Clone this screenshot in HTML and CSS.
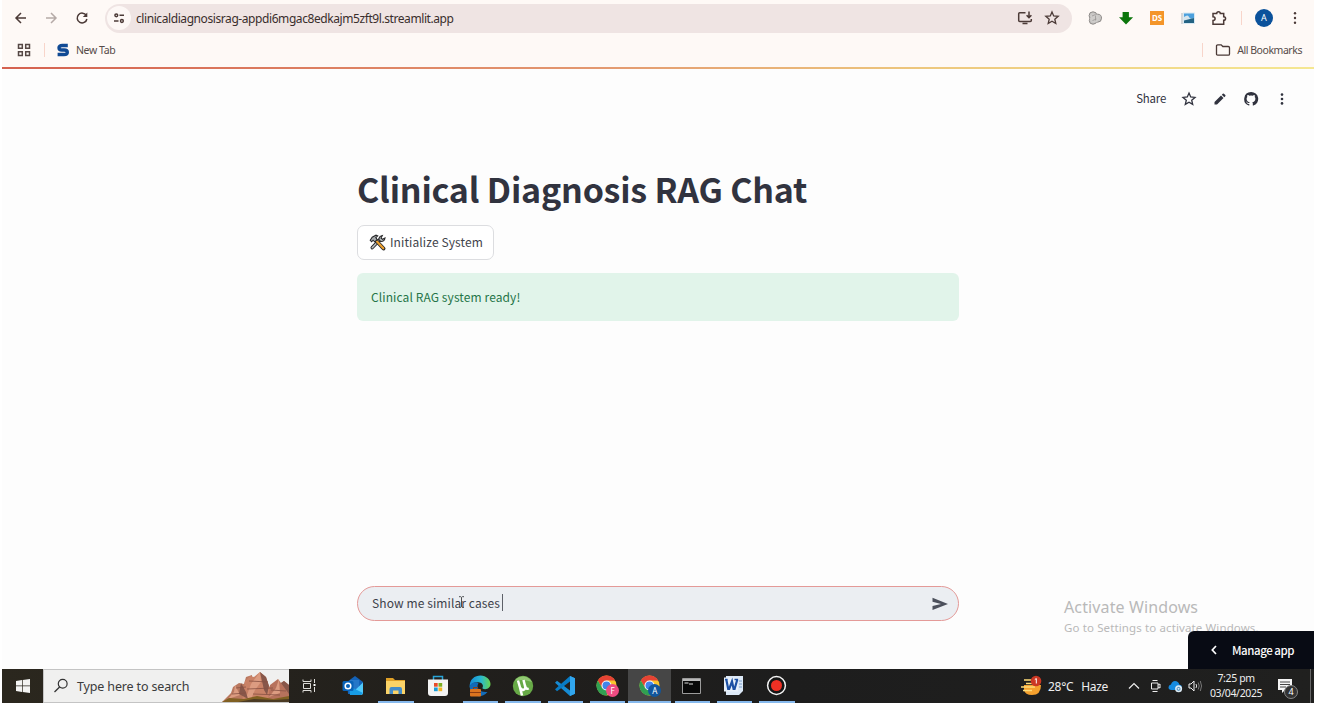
FILE: index.html
```
<!DOCTYPE html>
<html lang="en">
<head>
<meta charset="utf-8">
<title>Clinical Diagnosis RAG Chat</title>
<link rel="stylesheet" href="styles.css">
</head>
<body>
<div class="screen">
  <header class="browser">
    <div class="toolbar">
      <svg class="ico back" viewBox="0 0 16 16"><path d="M13 8H3.500M8 3L3 8l5 5" class="ln"/></svg>
      <svg class="ico fwd" viewBox="0 0 16 16"><path d="M3 8h9.500M8 3l5 5-5 5" class="ln faded"/></svg>
      <svg class="ico reload" viewBox="0 0 16 16"><path d="M12.300 5.500A4.900 4.900 0 1 0 12.900 9" class="ln"/><path d="M13.300 2.500v4.500H8.800z" fill="#4b3a37"/></svg>
      <div class="omnibox">
        <span class="site"><svg viewBox="0 0 14 14" width="14" height="14"><g fill="none" stroke="#4b3a37" stroke-width="1.500"><circle cx="4.300" cy="4.300" r="1.400"/><path d="M7.500 4.300h4.500M2 10h4.500"/><circle cx="9.900" cy="10" r="1.400"/></g></svg></span>
        <span class="url">clinicaldiagnosisrag-appdi6mgac8edkajm5zft9l.streamlit.app</span>
        <svg class="ico install" viewBox="0 0 16 16"><path d="M8.500 2.800H2.700q-1 0-1 1v6.700q0 1 1 1h10.600q1 0 1-1V9M5.500 13.400h5M12 1.500v5.800M9.600 5.200L12 7.600l2.400-2.400" class="ln"/></svg>
        <svg class="ico" viewBox="0 0 16 16"><path d="M8 1.900l1.700 4 4.500.4-3.400 2.900 1 4.300L8 11.300l-3.800 2.200 1-4.300-3.400-2.900 4.500-.4z" class="ln thin"/></svg>
      </div>
      <div class="extensions">
        <svg class="ico" viewBox="0 0 16 16"><g fill="#c9c7c5" stroke="#8d8a88" stroke-width="1"><circle cx="6" cy="5.700" r="3.900"/><circle cx="10.500" cy="8.200" r="4"/><circle cx="6" cy="10.500" r="3.700"/></g><circle cx="7.500" cy="8.200" r="4.300" fill="#cfcdcb"/><path d="M5 6l3.500-1.500M5.500 10.500l4-1.500M8.500 5.500v5" stroke="#9a9795" stroke-width=".8" fill="none"/></svg>
        <svg class="ico" viewBox="0 0 16 16"><path d="M4.600 2h6.300v5.200h4.200L8 14.600 1 7.200h3.600z" fill="#0b760b"/></svg>
        <span class="ds">DS</span>
        <svg class="ico" viewBox="0 0 16 16"><path d="M1 3h3v11H1z" fill="#d5d7d9"/><path d="M3 2.500h12v11.500H3z" fill="#d9e9f3"/><path d="M4 3.500h10v6.500H4z" fill="#4ca0dd"/><path d="M4 7q4-3 5 0t5 1v5H4z" fill="#d6e5ed"/><path d="M4 10.500l10-2.500v5H4z" fill="#246383"/></svg>
        <svg class="ico" viewBox="0 0 16 16"><path d="M2 3.500h3.700c0-2.500 3.600-2.500 3.600 0h3.400v3.200c2.500 0 2.500 3.600 0 3.600v3.900H2v-3.700c2.800-.2 2.800-3.500 0-3.700z" class="ln"/></svg>
        <i class="sep"></i>
        <span class="avatar">A</span>
        <svg class="ico" viewBox="0 0 16 16" fill="#4b3a37"><circle cx="8" cy="3.300" r="1.200"/><circle cx="8" cy="8" r="1.200"/><circle cx="8" cy="12.700" r="1.200"/></svg>
      </div>
    </div>
    <div class="bookmarks">
      <svg width="14" height="14" viewBox="0 0 14 14"><g fill="none" stroke="#554744" stroke-width="1.500"><path d="M1.500 1.500h3.800v3.800H1.500zM8.700 1.500h3.800v3.800H8.700zM1.500 8.700h3.800v3.800H1.500zM8.700 8.700h3.800v3.800H8.700z"/></g></svg>
      <i class="sep"></i>
      <svg class="slogo" width="14" height="14" viewBox="0 0 14 14"><path d="M11.800 2.500H6.200Q3 2.500 3 4.700t3 2.300h2.200Q11.300 7 11.300 9.200t-3.300 2.300H1.600" fill="none" stroke="#104a94" stroke-width="3.400"/></svg>
      <span class="newtab">New Tab</span>
      <i class="sep right"></i>
      <svg class="folder" width="16" height="14" viewBox="0 0 16 14"><path d="M1.500 3q0-1.200 1.200-1.200h3.500l1.600 1.700h5.500q1.200 0 1.200 1.200v6.300q0 1.200-1.200 1.200H2.700q-1.200 0-1.200-1.200z" class="ln thin"/></svg>
      <span class="allbm">All Bookmarks</span>
    </div>
    <div class="rainbow"></div>
  </header>

  <main class="app">
    <nav class="appbar">
      <span class="share">Share</span>
      <svg class="ico" viewBox="0 0 16 16"><path d="M8 2.100l1.700 3.900 4.300.4-3.300 2.800 1 4.200L8 11.200l-3.700 2.200 1-4.200L2 6.400l4.300-.4z" fill="none" stroke="#31333f" stroke-width="1.300"/></svg>
      <svg class="ico" viewBox="0 0 16 16"><path d="M2.500 11V13.500h2.500l6.500-6.500-2.500-2.500zM9.800 3.700l2.500 2.500 1-1q.5-.5 0-1.100l-1.400-1.400q-.6-.5-1.100 0z" fill="#31333f"/></svg>
      <svg class="ico" viewBox="0 0 16 16"><path d="M8 1.100a6.900 6.900 0 0 0-2.200 13.400c.35.100.5-.1.500-.3v-1.300c-1.900.4-2.300-.8-2.300-.8-.3-.8-.8-1-.8-1-.6-.4.100-.4.100-.4.700 0 1 .7 1 .7.600 1 1.600.7 2 .6.100-.5.200-.8.400-.9-1.500-.2-3.100-.8-3.100-3.400 0-.8.300-1.400.7-1.800-.1-.2-.3-.9.100-1.900 0 0 .6-.2 1.900.7a6.500 6.500 0 0 1 3.400 0c1.300-.9 1.900-.7 1.900-.7.400 1 .2 1.700.1 1.900.5.400.7 1 .7 1.800 0 2.600-1.600 3.200-3.100 3.400.2.200.5.600.5 1.300v1.900c0 .2.100.4.500.3A6.900 6.900 0 0 0 8 1.100z" fill="#31333f"/></svg>
      <svg class="ico" viewBox="0 0 16 16" fill="#31333f"><circle cx="8" cy="3.600" r="1.300"/><circle cx="8" cy="8" r="1.300"/><circle cx="8" cy="12.400" r="1.300"/></svg>
    </nav>
    <section class="column">
      <h1>Clinical Diagnosis RAG Chat</h1>
      <button class="init">
        <svg width="17" height="17" viewBox="0 0 17 17"><path d="M3.200 13.700L11 5.500" stroke="#29292b" stroke-width="3.400" stroke-linecap="round"/><path d="M3.200 13.700L11 5.500" stroke="#bcc0c2" stroke-width="1.500" stroke-linecap="round"/><path d="M10 5.800Q9.600 2.500 13.300 1.500L12 4l1.500 1.300 2.500-1.300Q15.500 7.700 11.700 7.500z" fill="#bcc0c2" stroke="#29292b" stroke-width="1.100"/><path d="M7 6.500l7.500 8" stroke="#29292b" stroke-width="3.800" stroke-linecap="round"/><path d="M8 7.500l6.300 6.800" stroke="#eda02e" stroke-width="2.100" stroke-linecap="round"/><path d="M1.200 6.200l2-3L7 1.200l1.700.7L6.800 3.600l1.400 2-2.500 2.200-1.600-1.600-1.500 1.600z" fill="#a9adaf" stroke="#29292b" stroke-width="1.100"/></svg>
        <span>Initialize System</span>
      </button>
      <div class="success">Clinical RAG system ready!</div>
      <div class="chat">
        <span class="typed">Show me similar cases</span><i class="caret"></i>
        <svg class="send" width="18" height="16" viewBox="0 0 18 16"><path d="M1.500 1.800L17 7.900 1.500 14v-4L10 7.900 1.500 5.800z" fill="#4c505c"/></svg>
        <svg class="ibeam" width="7" height="12" viewBox="0 0 7 12"><path d="M1 .7h1.700l.8.700.8-.7H6M3.500 1.400v9.300M1 11.300h1.700l.8-.7.8.700H6" fill="none" stroke="#4b4d50"/></svg>
      </div>
    </section>
    <div class="activate"><div class="act1">Activate Windows</div><div class="act2">Go to Settings to activate Windows.</div></div>
    <div class="manage">
      <svg width="8" height="12" viewBox="0 0 8 12"><path d="M6 2L2.300 6 6 10" fill="none" stroke="#fff" stroke-width="1.700"/></svg>
      <span>Manage app</span>
    </div>
  </main>

  <footer class="taskbar">
    <div class="start"><svg width="16" height="16" viewBox="0 0 16 16" fill="#f4f4f3"><path d="M1 3l6-.9v5.500H1zM7.700 2L15 1v6.600H7.700zM1 8.300h6v5.600L1 13zM7.700 8.300H15V15l-7.300-1z"/></svg></div>
    <div class="search">
      <svg class="mag" width="16" height="16" viewBox="0 0 16 16"><circle cx="9.700" cy="5.800" r="4.400" fill="none" stroke="#333" stroke-width="1.200"/><path d="M6.600 9L1.500 14" stroke="#333" stroke-width="1.300"/></svg>
      <span class="type">Type here to search</span>
      <svg class="mount" width="67" height="31" viewBox="0 0 67 31"><path d="M0 31l9-9 2-6 6-4 5 1 2-7 6-2 1 27z" fill="#b9785f"/><path d="M20 31l3-21 5-5 4 1 6-5 6 5 3 9 6 6 3 10z" fill="#c98267"/><path d="M46 31l2-17 8-6 3 4 3-2 5 4v17z" fill="#b7725c"/><path d="M38 1l1 10-6 8-4 9-5-1 5-14zM13 14l-1 7-6 7 12-4zM57 8l-3 9-7 9 11-4z" fill="#dc9c81"/><path d="M38 1l6 5 3 9-2 9-3-5zM19 12l5 9 2 7-9-5zM59 12l8 11v-9l-5-4z" fill="#87574a"/><path d="M14 17l10-1M27 10l19 1M25 18l26-1M49 19l15 1M10 23l14-1M31 23l27 1" stroke="#865143" stroke-width=".8" fill="none"/><path d="M0 31l7-4 15 1 13-3 16 3 16-3v6z" fill="#806022"/><path d="M16 31l16-3 20 1 15-1v3z" fill="#4b3a23"/></svg>
    </div>
    <div class="task view"><svg width="16" height="16" viewBox="0 0 16 16"><g fill="none" stroke="#dddcd8"><path d="M2 1.500v2h8v-2M2 14.500v-2h8v2M2.500 5.500h7v5h-7zM13.500 1v4M13.500 9v5"/></g><path d="M12.500 6h2v2h-2z" fill="#fff"/></svg></div>
    <div class="task"><svg width="22" height="22" viewBox="0 0 22 22"><path d="M5 7l8-6 8 6v12H6z" fill="#1462b7"/><path d="M8 5h9v9H8z" fill="#2577c8"/><path d="M9 19L21 7.500V18q0 2-2 2H9z" fill="#51cafb"/><path d="M7 11l14 7-2 2H8z" fill="#179ce5"/><rect x="0.500" y="6" width="11" height="10" rx="1.500" fill="#0862b7"/><circle cx="6" cy="11" r="2.800" fill="none" stroke="#fff" stroke-width="1.500"/></svg></div>
    <div class="task open"><svg width="22" height="22" viewBox="0 0 22 22"><path d="M1 3h7l2 2h10v5H1z" fill="#dfa027"/><path d="M1 6h19v13H1z" fill="#fbd367"/><path d="M4.500 19v-5q0-2 2-2h8.500q2 0 2 2v5h-3.500v-3.500h-5.500V19z" fill="#438cc9"/></svg></div>
    <div class="task"><svg width="22" height="22" viewBox="0 0 22 22"><path d="M6.500 5V1.500h9V5" fill="none" stroke="#2aa5d8" stroke-width="1.500"/><path d="M1 4.500h20V18q0 3-3 3H4q-3 0-3-3z" fill="#f3f3f3"/><path d="M7 8h3.700v3.700H7z" fill="#e84b28"/><path d="M11.500 8h3.700v3.700h-3.700z" fill="#7cae20"/><path d="M7 12.500h3.700v3.700H7z" fill="#189bd7"/><path d="M11.500 12.500h3.700v3.700h-3.700z" fill="#f3b423"/></svg></div>
    <div class="task open"><svg width="22" height="22" viewBox="0 0 22 22"><defs><linearGradient id="eg" x1="0" x2="1"><stop stop-color="#158bd8"/><stop offset=".55" stop-color="#29b8cf"/><stop offset="1" stop-color="#67d64c"/></linearGradient></defs><path d="M.7 13C0 4 6 .5 11.500.5c6 0 10 4.500 10 8.600 0 4.900-5.800 6.400-8.200 4.100 2-3-.8-6.200-4.500-5.900C4.500 7.300 1.500 9 .7 13z" fill="url(#eg)"/><path d="M.8 12c.3-5 7-6 8.700-3.500C7 11 9 18 18.500 17 14 22.500 7 22 4 19q-3-2.500-3.200-7z" fill="#126bb8"/><rect x="1" y="14" width="11" height="7.500" rx="1" fill="#db741f"/><path d="M1 17.500h11M4.500 14v-1.500h4V14" stroke="#8d3c12" fill="none"/></svg></div>
    <div class="task open"><svg width="22" height="22" viewBox="0 0 22 22"><circle cx="11" cy="11" r="10.200" fill="#67a947"/><path d="M3 5.500A10 10 0 0 1 20 7q-8-3-17-1.500z" fill="#91c873"/><path d="M6 5.500l2 7q1 3 3.700 2.200Q14 14 13 11l-1.500-6M13 11q1.200 3.800 3.800 2.500M8 12.500l2 8" fill="none" stroke="#fff" stroke-width="2.500"/></svg></div>
    <div class="task open"><svg width="22" height="22" viewBox="0 0 22 22"><path d="M16 1l5 2.200v15.600L16 21 1 7.700l2-2L16 15.500z" fill="#168bd3"/><path d="M16 1v5.500L3 16.300l-2-2z" fill="#087bc4"/><path d="M16 1l5 2.200v15.600L16 21z" fill="#31a6ee"/></svg></div>
    <div class="task open"><svg width="22" height="22" viewBox="0 0 22 22"><circle cx="10.500" cy="10.500" r="10" fill="#f8c42d"/><path d="M1.800 5.500A10 10 0 0 1 19.200 5.500H10.500L6.200 13z" fill="#e64334"/><path d="M1.800 5.500A10 10 0 0 0 10.500 20.500L14.800 13H6.200z" fill="#30a052"/><circle cx="10.500" cy="10.500" r="5" fill="#fff"/><circle cx="10.500" cy="10.500" r="4" fill="#4285eb"/></svg><b class="badge pink">F</b></div>
    <div class="task open current"><svg width="22" height="22" viewBox="0 0 22 22"><circle cx="10.500" cy="10.500" r="10" fill="#f8c42d"/><path d="M1.800 5.500A10 10 0 0 1 19.200 5.500H10.500L6.200 13z" fill="#e64334"/><path d="M1.800 5.500A10 10 0 0 0 10.500 20.500L14.800 13H6.200z" fill="#30a052"/><circle cx="10.500" cy="10.500" r="5" fill="#fff"/><circle cx="10.500" cy="10.500" r="4" fill="#4285eb"/></svg><b class="badge blue">A</b></div>
    <div class="task open"><svg width="22" height="22" viewBox="0 0 22 22"><path d="M1.500 3.500h18v15h-18z" fill="#080808" stroke="#9b9b9b"/><path d="M2 4h17v2H2z" fill="#b9b9b9"/><path d="M3.500 8h4M8 9h4" stroke="#ddd"/></svg></div>
    <div class="task open"><svg width="22" height="22" viewBox="0 0 22 22"><path d="M3 1h17v15l-4 4H3z" fill="#dce9f7"/><path d="M16 6h3M16 9h3M16 12h3" stroke="#7b9dcb"/><path d="M1 2.500h14v14H1z" fill="#e9f1fa"/><path d="M2 4.500h2.500M11.500 4.500H15" stroke="#1c50a4" stroke-width="1.500"/><path d="M3.300 4.500l1.900 9.500h1L9 6.500l1.600 7.500h1l2.700-9.500" fill="none" stroke="#1c50a4" stroke-width="2.200"/></svg></div>
    <div class="task open"><svg width="22" height="22" viewBox="0 0 22 22"><circle cx="10.500" cy="10.500" r="8.900" fill="#151515" stroke="#f3f3f3" stroke-width="1.500"/><circle cx="10.500" cy="10.500" r="5.500" fill="#ef3024"/></svg></div>
    <div class="tray">
      <svg class="haze" width="23" height="22" viewBox="0 0 23 22"><path d="M4 10h17q0 10-9 10Q5 20 4 15z" fill="#f5a12e"/><path d="M4 5h9M6 8.500h9M1 12h14M3 15.500h9" stroke="#ffdc78" stroke-width="1.700"/><circle cx="16" cy="6" r="5.300" fill="#cb3824"/><path d="M14.800 4.600L16.300 3.500v5" fill="none" stroke="#fff"/></svg>
      <span class="temp">28°C</span><span class="haze-t">Haze</span>
      <svg class="chev" width="12" height="10" viewBox="0 0 12 10"><path d="M1 7.500l5-5 5 5" fill="none" stroke="#eee" stroke-width="1.200"/></svg>
      <svg class="meet" width="12" height="14" viewBox="0 0 12 14"><path d="M2.500 1.500h5M2.500 12.500h5M1.500 4h6.500v6H1.500zM8 6l2-1v4L8 8" fill="none" stroke="#eee"/></svg>
      <svg class="cloud" width="15" height="14" viewBox="0 0 15 14"><path d="M3.500 11Q.5 11 .5 8.300.5 6 3 5.600 4 2 7 2q3.500 0 4.300 3.500Q14 6 14 8.500T11.500 11z" fill="#168be0"/><circle cx="10.600" cy="9.800" r="3.500" fill="#dceaf3"/><path d="M8.800 9.400q1.800-2 3.500 0M12.300 10.500q-1.700 1.600-3.500 0" fill="none" stroke="#2b76ac"/></svg>
      <svg class="spk" width="15" height="14" viewBox="0 0 15 14"><path d="M1 5h2l3-3v10L3 9H1z" fill="none" stroke="#eee"/><path d="M8 5q1.300 2 0 4" fill="none" stroke="#ddd"/><path d="M10.200 3.500q2 3.500 0 7M12.300 2q2.500 5 0 10" fill="none" stroke="#777"/></svg>
      <div class="clock"><div class="time">7:25 pm</div><div class="date">03/04/2025</div></div>
      <div class="notif"><svg width="16" height="16" viewBox="0 0 16 16"><path d="M1 1h14v11H8l-3 3v-3H1z" fill="#f5f5f5"/><path d="M3 4h10M3 6.500h10M3 9h6" stroke="#444"/></svg><b>4</b></div>
    </div>
  </footer>
</div>
</body>
</html>
```
FILE: styles.css
```
* { box-sizing: border-box; }
body { margin: 0; background: #fff; overflow: hidden; font-family: "Noto Sans", sans-serif; }
svg { display: block; flex: none; }
.screen { width: 1312px; height: 703px; margin-left: 2px; display: flex; flex-direction: column; background: #fdfdfd; }
.browser { height: 69px; background: #fef9f6; }
.ico { width: 16px; height: 16px; flex: none; }
.ln { fill: none; stroke: #4b3a37; stroke-width: 1.5; }
.thin { stroke-width: 1.3; }
.faded { stroke: #b5aaa7; }
.toolbar { height: 36px; display: flex; align-items: center; padding: 0 11px; }
.fwd { margin-left: 14px; }
.reload { margin-left: 15px; }
.omnibox { width: 967px; height: 29px; margin-left: 15px; border-radius: 15px; background: #efe4e3; display: flex; align-items: center; padding: 0 12px 0 2px; }
.site { width: 24px; height: 24px; border-radius: 50%; background: #fdf8f6; display: grid; place-items: center; }
.url { font-size: 12px; color: #3a2e2c; margin-left: 5px; flex: 1; white-space: nowrap; letter-spacing: -0.42px; padding-top: 1px; }
.install { margin-right: 11px; }
.extensions { display: flex; align-items: center; gap: 15px; margin-left: 15px; flex: 1; }
.ds { width: 14px; height: 14px; margin: 0 1px; background: #f49529; color: #fff; font: bold 8px/14px "Noto Sans", sans-serif; text-align: center; letter-spacing: -0.2px; }
.sep { width: 1px; height: 14px; background: #f8d5ca; flex: none; }
.extensions .sep { margin: 0 -2px 0 -1px; }
.avatar { width: 18px; height: 18px; border-radius: 50%; background: #0b529b; color: #fff; font-size: 9px; line-height: 18px; text-align: center; flex: none; }
.extensions .avatar + svg { margin-left: -1px; }
.bookmarks { height: 31px; display: flex; align-items: center; padding: 0 12px 4px 15px; font-size: 10.5px; color: #564b49; white-space: nowrap; }
.bookmarks .sep { margin-left: 13px; }
.slogo { margin-left: 11px; }
.newtab { margin-left: 6px; letter-spacing: -0.4px; }
.bookmarks .sep.right { margin-left: auto; }
.folder { margin-left: 12px; }
.allbm { margin-left: 6px; letter-spacing: -0.45px; }
.rainbow { height: 2px; background: linear-gradient(90deg, #d5614f, #e39870 45%, #edc77d 70%, #f5e791); }
.app { height: 600px; position: relative; font-family: "Noto Sans CJK SC", sans-serif; color: #31333f; }
.appbar { height: 60px; display: flex; align-items: center; justify-content: flex-end; gap: 15px; padding-right: 24px; }
.share { font-size: 11.4px; line-height: 20px; margin: -2px 0 0; letter-spacing: -0.2px; }
.column { width: 602px; margin-left: 355px; padding-top: 35px; }
h1 { margin: 0; font-size: 34px; font-weight: 700; line-height: 50px; letter-spacing: -0.19px; white-space: nowrap; }
.init { display: flex; align-items: center; height: 35px; width: 137px; margin-top: 11px; padding: 0 0 1px 11px; gap: 4px; border: 1px solid #dcdde0; border-radius: 7px; background: #fff; font: 12px/20px "Noto Sans CJK SC", sans-serif; letter-spacing: 0.1px; color: #41434b; white-space: nowrap; }
.success { height: 48px; margin-top: 13px; padding: 0 14px; border-radius: 6px; background: #e1f4ea; color: #257548; font-size: 12px; line-height: 48px; letter-spacing: 0.1px; }
.chat { position: relative; display: flex; align-items: center; height: 35px; margin-top: 265px; padding: 0 9px 0 14px; border: 1px solid #e49a98; border-radius: 18px; background: #ebeef2; font-size: 12px; color: #3d414a; }
.typed { letter-spacing: 0.1px; margin-top: -2px; }
.caret { width: 1px; height: 17px; margin-left: 2px; margin-top: -2px; background: #5d6068; }
.send { margin-left: auto; }
.ibeam { position: absolute; left: 100px; top: 9px; }
.activate { position: absolute; left: 1062px; top: 527px; font-family: "Noto Sans", sans-serif; color: #b9b9b9; white-space: nowrap; }
.act1 { font-size: 16px; line-height: 22px; letter-spacing: 0.12px; }
.act2 { font-size: 11.5px; line-height: 19px; letter-spacing: 0.12px; }
.manage { position: absolute; right: 0; bottom: 0; width: 126px; height: 38px; display: flex; align-items: center; gap: 14px; padding: 0 0 1px 22px; border-top-left-radius: 6px; background: #080b14; color: #fafafa; font-size: 11.5px; font-weight: 500; letter-spacing: -0.45px; white-space: nowrap; }
.taskbar { height: 34px; display: flex; background: linear-gradient(90deg, #2b271e, #211f1c 35%, #1d1d1d 60%, #20201f); color: #eee; }
.start { width: 41px; display: grid; place-items: center; }
.search { width: 246px; display: flex; align-items: center; background: #f0f0ef; border: 1px solid #c4c4c4; border-right: 0; color: #3b3b3b; padding-left: 9px; white-space: nowrap; }
.type { margin-left: 8px; font-size: 12.5px; letter-spacing: -0.15px; }
.mount { margin-left: auto; align-self: flex-end; }
.task { width: 42.35px; flex: none; display: grid; place-items: center; position: relative; }
.task.view { width: 43px; padding-right: 3px; }
.open::after { content: ""; position: absolute; left: 4px; right: 3px; bottom: 0; height: 2px; background: #86b9ed; }
.current { background: #464646; }
.current::after { left: 0; right: 0; }
.badge { position: absolute; left: 20px; top: 15px; width: 13px; height: 13px; border-radius: 50%; font: 8px/13px "Noto Sans", sans-serif; text-align: center; color: #fff; }
.pink { background: #ee4b82; }
.blue { background: #11569c; }
.tray { margin-left: auto; display: flex; align-items: center; width: 296px; white-space: nowrap; font-size: 12px; }
.haze { margin-left: 2px; }
.temp { margin-left: 5px; letter-spacing: -0.3px; }
.haze-t { margin-left: 8px; letter-spacing: -0.3px; }
.chev { margin-left: 20px; }
.meet { margin-left: 10px; }
.cloud { margin-left: 6px; }
.spk { margin-left: 5px; }
.clock { margin-left: 5px; width: 56px; text-align: center; font-size: 10.5px; line-height: 15.500px; letter-spacing: -0.35px; }
.notif { position: relative; margin-left: 13px; width: 34px; height: 34px; padding-top: 9px; border-right: 1px solid #666; }
.notif b { position: absolute; left: 7px; top: 16px; width: 14px; height: 14px; border: 1px solid #888; border-radius: 50%; background: #333; font: 9px/12px "Noto Sans", sans-serif; text-align: center; color: #fff; }
```
